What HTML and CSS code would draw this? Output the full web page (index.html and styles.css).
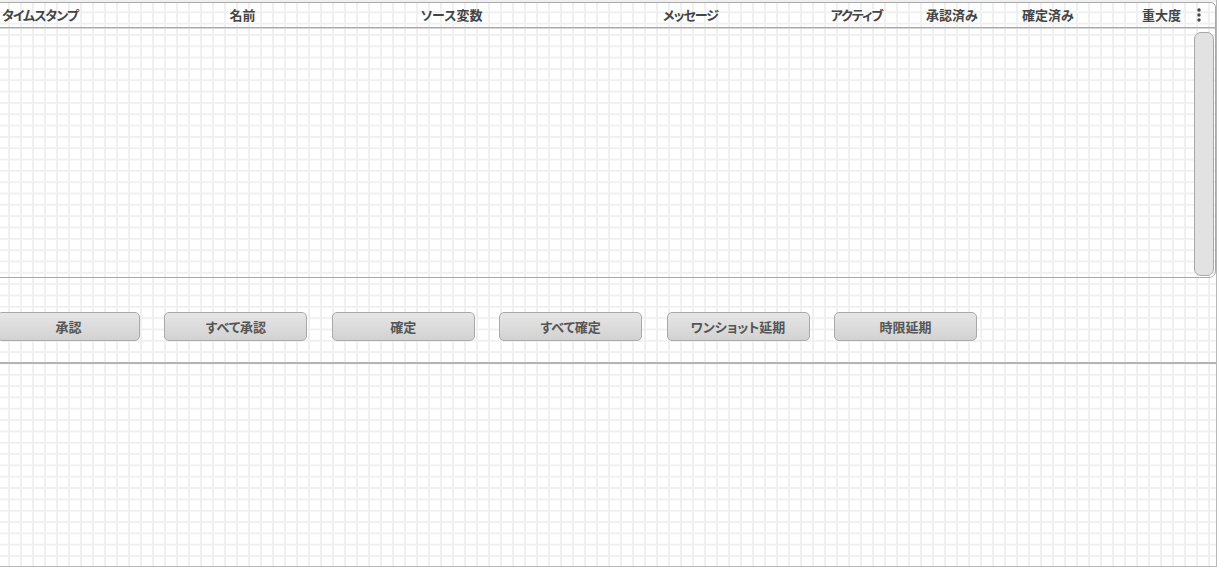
FILE: index.html
```html
<!DOCTYPE html>
<html lang="ja">
<head>
  <meta charset="UTF-8">
  <meta name="viewport" content="width=device-width, initial-scale=1.0">
  <title>アラーム</title>
  <link rel="stylesheet" href="styles.css">
</head>
<body>
  <div class="frame">
    <!-- Alarm table -->
    <div class="alarm-table">
      <div class="table-head">
        <div class="col col-first kana">タイムスタンプ</div>
        <div class="col">名前</div>
        <div class="col">ソース変数</div>
        <div class="col kana">メッセージ</div>
        <div class="col kana">アクティブ</div>
        <div class="col">承認済み</div>
        <div class="col">確定済み</div>
        <div class="col col-right">重大度</div>
        <div class="col col-menu">
          <svg width="6" height="16" viewBox="0 0 6 16">
            <circle cx="3" cy="3" r="1.7" fill="#444"/>
            <circle cx="3" cy="8" r="1.7" fill="#444"/>
            <circle cx="3" cy="13" r="1.7" fill="#444"/>
          </svg>
        </div>
      </div>
      <div class="table-body">
        <div class="scroll-thumb"></div>
      </div>
    </div>

    <!-- Actions -->
    <div class="actions">
      <button class="btn">承認</button>
      <button class="btn">すべて承認</button>
      <button class="btn">確定</button>
      <button class="btn">すべて確定</button>
      <button class="btn">ワンショット延期</button>
      <button class="btn">時限延期</button>
    </div>

    <div class="divider"></div>

    <div class="details"></div>
  </div>
</body>
</html>
```

FILE: styles.css
```css
html, body {
  margin: 0;
  padding: 0;
  background: #fff;
  overflow: hidden;
}

body {
  font-family: "Noto Sans CJK JP", "Liberation Sans", sans-serif;
  font-feature-settings: "palt";
  color: #444;
  width: 1217px;
  height: 567px;
  background-color: #fff;
  background-image:
    linear-gradient(to right, #f0f0f0 2px, transparent 2px),
    linear-gradient(to bottom, #f0f0f0 2px, transparent 2px);
  background-size: 12px 11.33px;
  background-position: 8px 0px;
}

.frame {
  box-sizing: border-box;
  height: 567px;
  display: flex;
  flex-direction: column;
  border-right: 1px solid #b8b8b8;
  border-bottom: 1px solid #b8b8b8;
}

.alarm-table {
  margin-top: 2px;
  margin-left: -6px;
  border: 1px solid #a9a9a9;
  border-radius: 5px 5px 7px 7px;
}

.table-head {
  height: 24px;
  display: grid;
  grid-template-columns: 145px 205px 213px 265px 67px 124px 68px 103px 1fr;
  align-items: center;
  border-bottom: 1px solid #a9a9a9;
  box-shadow: 0 1px 0 #d6d6d6;
  font-size: 13px;
  font-weight: bold;
}

.col {
  text-align: center;
  white-space: nowrap;
  line-height: 24px;
}

.kana {
  letter-spacing: -1px;
}

.col-first {
  text-align: left;
  padding-left: 7px;
}

.col-right {
  text-align: right;
  padding-right: 4px;
}

.col-menu {
  display: flex;
  align-items: center;
  padding-left: 11px;
}

.table-body {
  height: 248px;
  display: flex;
  justify-content: flex-end;
  padding: 3px 1px 1px 0;
  box-sizing: border-box;
  margin-top: 1px;
}

.scroll-thumb {
  width: 20px;
  box-sizing: border-box;
  height: 100%;
  background: #e2e2e2;
  border: 1px solid #a8a8a8;
  border-radius: 7px;
}

.actions {
  display: flex;
  gap: 24.4px;
  margin-left: -3px;
  padding: 34px 0 21px;
}

.btn {
  width: 143px;
  height: 29px;
  font-family: inherit;
  font-feature-settings: "palt";
  font-size: 13px;
  font-weight: bold;
  color: #555;
  background: linear-gradient(to bottom, #e6e6e6, #d2d2d2);
  border: 1px solid #a9a9a9;
  border-radius: 5px;
  padding: 0;
  cursor: pointer;
}

.divider {
  height: 2px;
  background: #b4b4b4;
}

.details {
  flex: 1;
}
```
